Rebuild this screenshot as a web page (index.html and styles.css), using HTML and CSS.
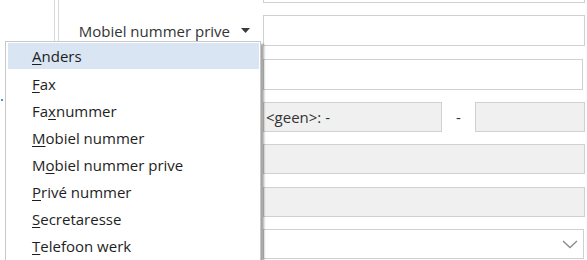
FILE: index.html
```html
<!DOCTYPE html>
<html lang="nl">
<head>
<meta charset="utf-8">
<link rel="stylesheet" href="styles.css">
</head>
<body>
<div class="screen">
  <div class="side"><span class="dot"></span></div>
  <div class="split"></div>
  <div class="form">
    <div class="label"></div>
    <div class="cell"><div class="field"></div></div>

    <div class="label label-select">
      <span>Mobiel nummer prive</span>
      <svg class="caret" width="9" height="5" viewBox="0 0 9 5"><path d="M0 0h9L4.5 5z" fill="#3a3a3a"/></svg>
    </div>
    <div class="cell"><div class="field"></div></div>

    <div class="label"></div>
    <div class="cell"><div class="field narrow"></div></div>

    <div class="label"></div>
    <div class="cell split-cell">
      <div class="field disabled geen">&lt;geen&gt;: -</div>
      <div class="dash">-</div>
      <div class="field disabled small"></div>
    </div>

    <div class="label"></div>
    <div class="cell"><div class="field disabled"></div></div>

    <div class="label"></div>
    <div class="cell"><div class="field disabled"></div></div>

    <div class="label"></div>
    <div class="cell"><div class="field combo">
      <svg class="chev" width="16" height="9" viewBox="0 0 16 9"><path d="M1 1l7 6.5L15 1" fill="none" stroke="#8a8a8a" stroke-width="1.3"/></svg>
    </div></div>
  </div>

  <ul class="menu">
    <li class="item active"><u>A</u>nders</li>
    <li class="item"><u>F</u>ax</li>
    <li class="item">Fa<u>x</u>nummer</li>
    <li class="item"><u>M</u>obiel nummer</li>
    <li class="item">M<u>o</u>biel nummer prive</li>
    <li class="item"><u>P</u>rivé nummer</li>
    <li class="item"><u>S</u>ecretaresse</li>
    <li class="item"><u>T</u>elefoon werk</li>
  </ul>
</div>
</body>
</html>
```

FILE: styles.css
```css
* { box-sizing: border-box; }
html, body { margin: 0; padding: 0; background: #fff; }
body {
  font-family: "Open Sans", "Noto Sans", "DejaVu Sans", sans-serif;
  font-size: 15px;
  color: #2b2b2b;
}
.screen {
  position: relative;
  width: 587px;
  height: 260px;
  overflow: hidden;
  display: flex;
  align-items: flex-start;
}
.side {
  width: 55px;
  height: 260px;
  border-right: 1px solid #d8d8d8;
  flex: none;
  padding-top: 99px;
}
.dot {
  display: block;
  width: 2px;
  height: 2px;
  margin-left: 1px;
  background: #4a90e2;
}
.split {
  width: 1px;
  height: 260px;
  margin-left: 3px;
  background: #d8d8d8;
  flex: none;
}
.form {
  flex: none;
  margin-top: -28px;
  display: grid;
  grid-template-columns: 204px 322px;
  grid-template-rows: 43px 44px 43px 42px 43px 42px 42px;
}
.label-select {
  height: 31px;
  display: flex;
  align-items: center;
  justify-content: flex-end;
  gap: 11px;
  padding-right: 13px;
  color: #333;
}
.caret { display: block; margin-top: -1px; }
.cell { display: flex; align-items: flex-start; }
.field {
  height: 31px;
  width: 322px;
  border: 1px solid #d0d0d0;
  background: #fff;
}
.narrow { width: 320px; }
.disabled { background: #f0f0f0; height: 30px; }
.geen {
  width: 179px;
  padding-left: 2px;
  display: flex;
  align-items: center;
  color: #333;
}
.dash {
  width: 33px;
  text-align: center;
  line-height: 30px;
  color: #333;
}
.small { width: 110px; }
.combo {
  height: 30px;
  width: 321px;
  display: flex;
  align-items: center;
  justify-content: flex-end;
  padding-right: 5px;
}
.chev { display: block; }
.menu {
  position: absolute;
  left: 5px;
  top: 41px;
  width: 256px;
  margin: 0;
  padding: 1px 1px 20px 2px;
  list-style: none;
  background: #fff;
  border: 1px solid #c8c8c8;
  box-shadow: 3px 3px 2px rgba(0, 0, 0, 0.35);
  font-size: 15px;
  color: #1e1e1e;
}
.item {
  height: 27px;
  line-height: 28px;
  padding-left: 24px;
}
.item u { text-underline-offset: 2px; }
.active { background: #d9e5f3; height: 26px; margin-bottom: 1px; line-height: 27px; }
```
